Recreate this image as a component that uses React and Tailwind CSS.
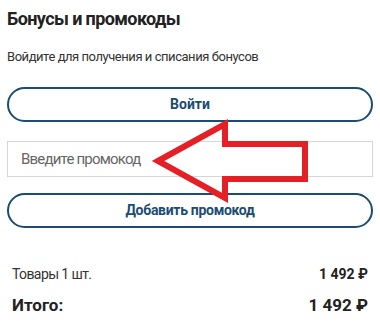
export default function App() {
  return (
    <div className="relative w-[380px] h-[325px] bg-white font-['Roboto',sans-serif] text-[#222]">
      <div className="px-[7px] pt-[7px]">
        <h2 className="text-[18px] leading-[24px] font-bold tracking-[-0.6px] text-[#222]">Бонусы и промокоды</h2>
        <p className="mt-[17px] text-[13px] leading-[18px] tracking-[-0.45px] text-[#333]">
          Войдите для получения и списания бонусов
        </p>
        <button className="mt-[21px] h-[35px] w-full rounded-full border-2 border-[#1b4c72] text-[14px] font-bold text-[#1b4c72]">
          Войти
        </button>
        <input
          type="text"
          placeholder="Введите промокод"
          className="mt-[19px] block h-[36px] w-full border border-[#d6d6d6] px-[13px] text-[15px] tracking-[-0.8px] outline-none placeholder:text-[#666]"
        />
        <button className="mt-[16px] h-[35px] w-full rounded-full border-2 border-[#1b4c72] text-[14px] font-bold tracking-[-0.3px] text-[#1b4c72]">
          Добавить промокод
        </button>
      </div>
      <div className="mt-[36px] px-[12px]">
        <div className="flex items-center justify-between text-[14px] leading-[20px]">
          <span className="tracking-[-0.6px] text-[#333]">Товары 1 шт.</span>
          <span className="font-bold text-[#222]">1 492 ₽</span>
        </div>
        <div className="mt-[9px] flex items-center justify-between text-[17px] leading-[24px] font-bold text-[#222]">
          <span>Итого:</span>
          <span>1 492 ₽</span>
        </div>
      </div>
      <svg className="pointer-events-none absolute left-0 top-0" width="380" height="325" viewBox="0 0 380 325">
        <polygon
          points="158,161 225,124 225,144 305,144 305,179 225,179 225,198"
          fill="none"
          stroke="#e42026"
          strokeWidth="6"
          strokeLinejoin="miter"
          strokeMiterlimit="10"
        />
      </svg>
    </div>
  );
}
